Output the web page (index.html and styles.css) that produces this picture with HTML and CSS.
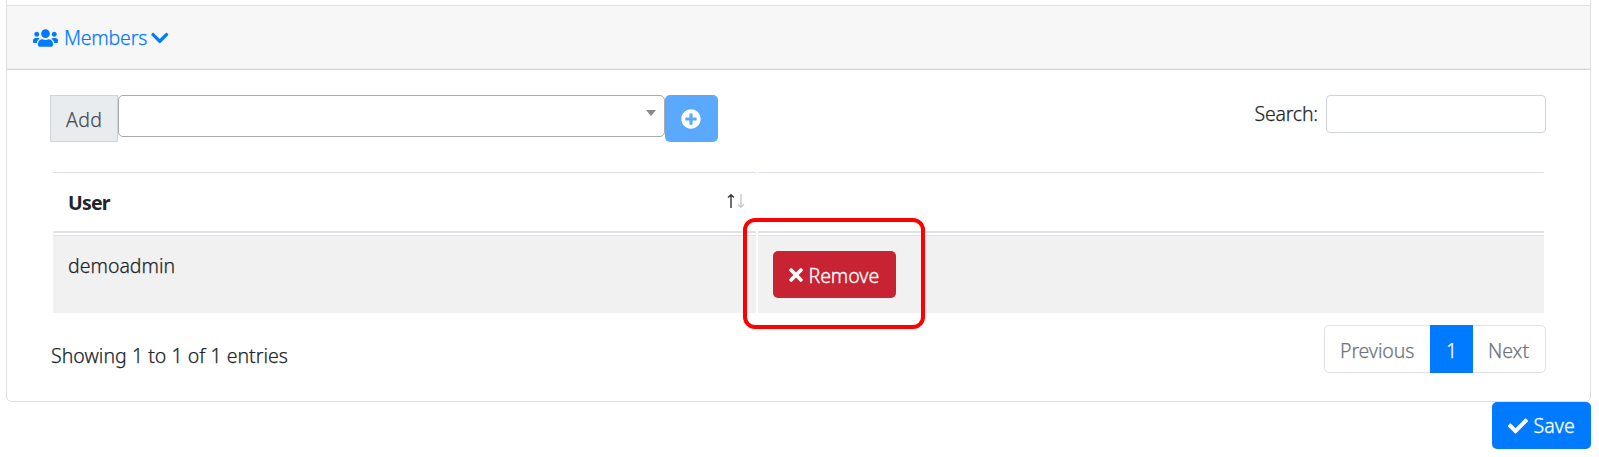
FILE: index.html
```html
<!DOCTYPE html>
<html lang="en">
<head>
<meta charset="utf-8">
<title>Members</title>
<link rel="stylesheet" href="styles.css">
</head>
<body>
<div class="page">
  <div class="card-tail"></div>
  <section class="card">
    <header class="card-header">
      <a class="toggle">
        <svg class="icon-users" viewBox="0 0 640 512"><path d="M96 224c35.3 0 64-28.7 64-64s-28.7-64-64-64-64 28.7-64 64 28.7 64 64 64zm448 0c35.3 0 64-28.7 64-64s-28.7-64-64-64-64 28.7-64 64 28.7 64 64 64zm32 32h-64c-17.6 0-33.5 7.1-45.1 18.6 40.3 22.1 68.9 62 75.1 109.4h66c17.7 0 32-14.3 32-32v-32c0-35.3-28.7-64-64-64zm-256 0c61.9 0 112-50.1 112-112S381.9 32 320 32 208 82.1 208 144s50.1 112 112 112zm76.8 32h-8.3c-20.8 10-43.9 16-68.5 16s-47.6-6-68.5-16h-8.3C179.6 288 128 339.6 128 403.2V432c0 26.5 21.5 48 48 48h288c26.5 0 48-21.5 48-48v-28.8c0-63.6-51.6-115.2-115.2-115.2zm-223.7-13.4C161.5 263.1 145.6 256 128 256H64c-35.3 0-64 28.7-64 64v32c0 17.7 14.3 32 32 32h65.9c6.3-47.4 34.9-87.3 75.2-109.4z"/></svg>
        <span class="toggle-text">Members</span>
        <svg class="icon-chevron" viewBox="0 0 448 512"><path d="M207.029 381.476L12.686 187.132c-9.373-9.373-9.373-24.569 0-33.941l22.667-22.667c9.357-9.357 24.522-9.375 33.901-.04L224 284.505l154.745-154.021c9.379-9.335 24.544-9.317 33.901.04l22.667 22.667c9.373 9.373 9.373 24.569 0 33.941L240.971 381.476c-9.373 9.372-24.569 9.372-33.942 0z"/></svg>
      </a>
    </header>
    <div class="card-body">
      <div class="toolbar">
        <div class="add-group">
          <span class="add-label">Add</span>
          <div class="select"><span class="caret"></span></div>
          <button class="btn btn-add" aria-label="Add member"><svg class="icon-em" viewBox="0 0 512 512"><path d="M256 8C119 8 8 119 8 256s111 248 248 248 248-111 248-248S393 8 256 8zm144 276c0 6.6-5.4 12-12 12h-92v92c0 6.6-5.4 12-12 12h-56c-6.6 0-12-5.4-12-12v-92h-92c-6.6 0-12-5.4-12-12v-56c0-6.6 5.4-12 12-12h92v-92c0-6.6 5.4-12 12-12h56c6.6 0 12 5.4 12 12v92h92c6.6 0 12 5.4 12 12v56z"/></svg></button>
        </div>
        <label class="search"><span class="search-text">Search:</span><input class="search-input" type="text"></label>
      </div>
      <div class="table">
        <div class="th">
          <span class="user-head">User</span>
          <svg class="sort" viewBox="0 0 18 14"><path class="sort-up" d="M4 14V1M1 3.5L4 .8L7 3.5"/><path class="sort-down" d="M14 0V13M11 10.5L14 13.2L17 10.5"/></svg>
        </div>
        <div class="th"></div>
        <div class="td"><span class="user-name">demoadmin</span></div>
        <div class="td">
          <div class="remove-wrap">
            <button class="btn btn-remove"><svg class="icon-times" viewBox="0 0 352 512"><path d="M242.72 256l100.07-100.07c12.28-12.28 12.28-32.19 0-44.48l-22.24-22.24c-12.28-12.28-32.19-12.28-44.48 0L176 189.28 75.93 89.21c-12.28-12.28-32.19-12.28-44.48 0L9.21 111.45c-12.28 12.28-12.28 32.19 0 44.48L109.28 256 9.21 356.07c-12.28 12.28-12.28 32.19 0 44.48l22.24 22.24c12.28 12.28 32.2 12.28 44.48 0L176 322.72l100.07 100.07c12.28 12.28 32.2 12.28 44.48 0l22.24-22.24c12.28-12.28 12.28-32.19 0-44.48L242.72 256z"/></svg><span class="remove-text">Remove</span></button>
            <div class="highlight"></div>
          </div>
        </div>
      </div>
      <div class="table-footer">
        <div class="info">Showing 1 to 1 of 1 entries</div>
        <nav class="pagination">
          <span class="page-item previous">Previous</span>
          <span class="page-item active">1</span>
          <span class="page-item next">Next</span>
        </nav>
      </div>
    </div>
  </section>
  <div class="actions">
    <button class="btn btn-save"><svg class="icon-em" viewBox="0 0 512 512"><path d="M173.898 439.404l-166.4-166.4c-9.997-9.997-9.997-26.206 0-36.204l36.203-36.204c9.997-9.998 26.207-9.998 36.204 0L192 312.69 432.095 72.596c9.997-9.997 26.207-9.997 36.204 0l36.203 36.204c9.997 9.997 9.997 26.206 0 36.204l-294.4 294.401c-9.998 9.997-26.207 9.997-36.204-.001z"/></svg><span class="save-text">Save</span></button>
  </div>
</div>
</body>
</html>
```
FILE: styles.css
```css
* { box-sizing: border-box; }
body {
  margin: 0;
  background: #fff;
  color: #212529;
  font: 300 19.5px/30px "Noto Sans", "Open Sans", sans-serif;
  -webkit-text-stroke: .25px currentColor;
  overflow: hidden;
}
svg { display: block; fill: currentColor; flex: none; }
.page { padding: 0 8px 0 6px; height: 457px; }
.card-tail { height: 5px; border: solid #dfdfdf; border-width: 0 1px; }
.card {
  height: 397px;
  border: 1px solid #dfdfdf;
  border-radius: 0 0 5px 5px;
}
.card-header {
  height: 64px;
  padding: 17px 26px;
  background: #f7f7f7;
  border-bottom: 1px solid #d6d6d6;
  box-shadow: inset 0 -1px #ececec;
}
.toggle { display: flex; align-items: center; color: #007bff; }
.icon-users { width: 25px; height: 20px; }
.toggle-text { margin-left: 6px; width: 84px; letter-spacing: -0.2px; }
.icon-chevron { width: 17.5px; height: 20px; margin-left: 3px; }
.icon-em { width: 20px; height: 20px; }
.icon-times { width: 14px; height: 20px; }
.card-body { padding: 25px 43px 0; }
.toolbar { display: flex; justify-content: space-between; height: 77px; padding-right: 1px; }
.add-group { display: flex; align-items: flex-start; }
.add-label {
  width: 68px;
  height: 47px;
  padding: 9px 0 0 15px;
  line-height: 30px;
  letter-spacing: .3px;
  color: #495057;
  background: #e9ecef;
  border: 1px solid #ced4da;
}
.select {
  display: flex;
  justify-content: flex-end;
  width: 547px;
  height: 42px;
  padding: 14px 8px 0 0;
  border: 1px solid #aaa;
  border-radius: 5px;
}
.caret {
  width: 0;
  height: 0;
  border: solid transparent;
  border-width: 6px 5px 0;
  border-top-color: #888;
}
.btn {
  display: flex;
  align-items: center;
  height: 47px;
  border: 0;
  border-radius: 5px;
  padding: 0 16px;
  font: inherit;
  color: #fff;
  -webkit-text-stroke: .35px currentColor;
}
.btn-add { width: 53px; background: #5aa9ff; }
.search { display: flex; }
.search-text { width: 71.5px; padding-top: 4px; letter-spacing: -0.2px; }
.search-input {
  width: 220px;
  height: 38px;
  border: 1px solid #ced4da;
  border-radius: 4px;
  background: #fff;
}
.table {
  display: grid;
  grid-template-columns: 703px 786px;
  grid-template-rows: 61px 78px;
  gap: 2px;
  padding-left: 3px;
}
.th {
  display: flex;
  justify-content: space-between;
  padding: 15px 11px 0 15px;
  border-top: 1px solid #dee2e6;
  border-bottom: 2px solid #dee2e6;
  font-weight: 700;
  -webkit-text-stroke: 0;
}
.user-head { letter-spacing: -0.8px; }
.user-name { letter-spacing: 0; }
.sort { width: 18px; height: 14px; margin-top: 6px; fill: none; }
.sort-up { stroke: #333; stroke-width: 1.4; }
.sort-down { stroke: #c8c8c8; stroke-width: 1.4; }
.td {
  padding: 15px;
  background: #f1f1f1;
  border-top: 1px solid #dee2e6;
}
.remove-wrap { position: relative; width: 123px; height: 47px; }
.btn-remove { width: 123px; background: #c82333; }
.remove-text { margin-left: 5.5px; padding-top: 2px; letter-spacing: -0.05px; }
.highlight {
  position: absolute;
  left: -30px;
  top: -33px;
  width: 182px;
  height: 111px;
  border: 4px solid #f00;
  border-radius: 12px;
}
.table-footer { display: flex; justify-content: space-between; padding: 12px 1px 0 0; }
.info { padding: 16px 0 0 1px; letter-spacing: .03px; }
.pagination {
  display: flex;
  width: 222px;
  height: 48px;
  border: 1px solid #dee2e6;
  border-radius: 5px;
  color: #6c757d;
}
.page-item { padding-top: 10px; }
.previous { width: 105px; padding-left: 15px; letter-spacing: -0.1px; }
.active { width: 43px; margin: -1px 0; padding-top: 11px; text-align: center; background: #007bff; color: #fff; }
.next { padding-left: 15px; letter-spacing: 0; }
.actions { display: flex; justify-content: flex-end; }
.btn-save { width: 99px; background: #007bff; }
.save-text { margin-left: 5.5px; letter-spacing: .1px; }
```
